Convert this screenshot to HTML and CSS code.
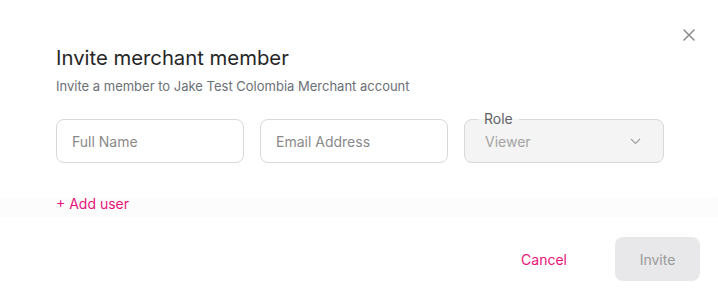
FILE: index.html
```html
<!DOCTYPE html>
<html>
<head>
<meta charset="utf-8">
<link rel="stylesheet" href="styles.css">
</head>
<body>
<div class="modal">
  <button class="close" aria-label="Close">
    <svg width="12" height="12" viewBox="0 0 12 12"><path d="M1 1L11 11M11 1L1 11" stroke="#8a8a8a" stroke-width="1.5" stroke-linecap="round" fill="none"/></svg>
  </button>
  <div class="body">
    <h1 class="title">Invite merchant member</h1>
    <p class="subtitle">Invite a member to Jake Test Colombia Merchant account</p>
    <div class="fields">
      <div class="input"><span class="placeholder">Full Name</span></div>
      <div class="input"><span class="placeholder">Email Address</span></div>
      <fieldset class="select">
        <legend>Role</legend>
        <div class="select-value">
          <span>Viewer</span>
          <svg width="11" height="7" viewBox="0 0 11 7"><path d="M1 1L5.5 5.5L10 1" stroke="#a0a0a0" stroke-width="1.2" fill="none"/></svg>
        </div>
      </fieldset>
    </div>
    <a class="add-user">+ Add user</a>
  </div>
  <div class="footer">
    <button class="btn-cancel">Cancel</button>
    <button class="btn-invite">Invite</button>
  </div>
</div>
</body>
</html>
```
FILE: styles.css
```css
* { box-sizing: border-box; }
html, body { margin: 0; padding: 0; }
body {
  background: #5f5f5f;
  font-family: Inter, "Noto Sans", sans-serif;
  width: 718px;
  height: 290px;
  overflow: hidden;
}
.modal {
  position: relative;
  background: #fff;
  border-radius: 12px 12px 0 0;
  height: 290px;
  display: flex;
  flex-direction: column;
}
.close {
  position: absolute;
  top: 29px;
  right: 23px;
  border: 0;
  background: none;
  padding: 0;
  width: 12px;
  height: 12px;
  display: flex;
}
.body {
  padding: 44px 54px 3px 56px;
  background: linear-gradient(to bottom, #fff 0, #fff 197px, #fcfcfc 198px, #fcfcfc 100%);
}
.title {
  margin: 0;
  font-size: 20.3px;
  line-height: 28px;
  font-weight: 400;
  color: #262626;
}
.subtitle {
  margin: 4px 0 0;
  font-size: 13px;
  line-height: 20px;
  color: #6b6f76;
}
.fields {
  margin-top: 15px;
  display: flex;
  gap: 16px;
  align-items: flex-end;
}
.input {
  width: 188px;
  height: 44px;
  border: 1px solid #d8d8d8;
  border-radius: 8px;
  padding: 0 15px;
  display: flex;
  align-items: center;
}
.placeholder {
  font-size: 14px;
  color: #8a8a8a;
}
.select {
  margin: 0;
  width: 200px;
  border: 1px solid #d8d8d8;
  border-radius: 8px;
  background: #f4f4f4;
  padding: 0 22px 0 20px;
  min-width: 0;
}
.select legend {
  margin-left: -7px;
  padding: 0 6px 0 6px;
  font-size: 14px;
  line-height: 16px;
  color: #5f6368;
}
.select-value {
  height: 35px;
  padding-top: 5px;
  display: flex;
  justify-content: space-between;
  font-size: 14px;
  line-height: 20px;
  color: #a3a3a3;
}
.select-value svg { margin-top: 6px; }
.add-user {
  display: block;
  margin-top: 31px;
  font-size: 14px;
  line-height: 20px;
  color: #e8137b;
}
.footer {
  flex: 1;
  display: flex;
  justify-content: flex-end;
  align-items: flex-start;
  padding: 20px 18px 0 0;
  gap: 32px;
}
.footer button {
  font-family: inherit;
  font-size: 14px;
  border: 0;
  height: 44px;
  border-radius: 8px;
}
.btn-cancel {
  background: none;
  color: #e8137b;
  padding: 0 16px;
}
.btn-invite {
  background: #e8e8ea;
  color: #9a9a9a;
  width: 85px;
}
```
